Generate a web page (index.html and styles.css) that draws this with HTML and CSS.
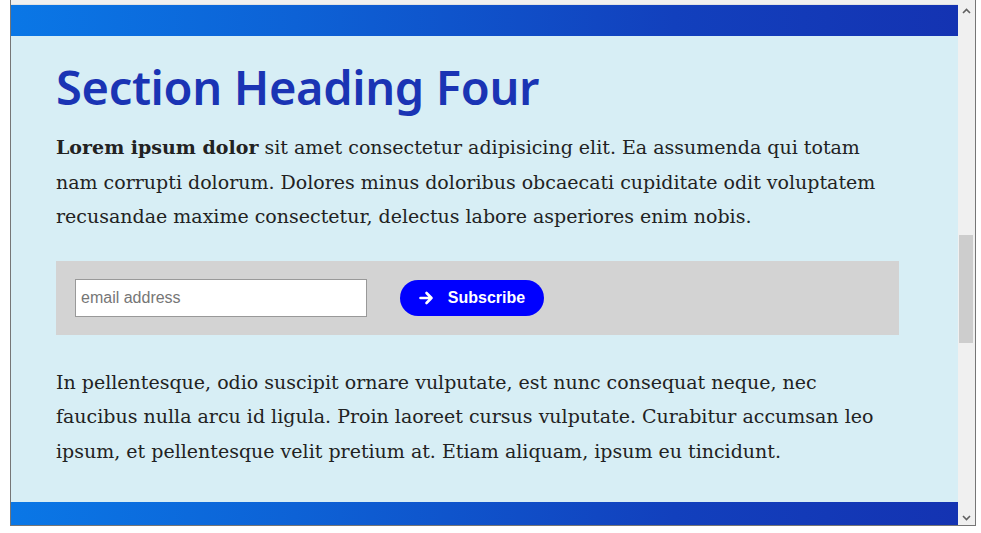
FILE: index.html
```html
<!DOCTYPE html>
<html>
<head>
<meta charset="utf-8">
<link rel="stylesheet" href="styles.css">
</head>
<body>
<div class="frame">
  <div class="viewport">
    <div class="strip"></div>
    <div class="band band-top"></div>
    <section class="section">
      <h2 class="heading">Section Heading Four</h2>
      <p class="text"><strong>Lorem ipsum dolor</strong> sit amet consectetur adipisicing elit. Ea assumenda qui totam<br>nam corrupti dolorum. Dolores minus doloribus obcaecati cupiditate odit voluptatem<br>recusandae maxime consectetur, delectus labore asperiores enim nobis.</p>
      <form class="signup">
        <input class="email" type="text" placeholder="email address">
        <button class="btn" type="button">
          <svg class="arrow" width="15" height="14" viewBox="0 0 15 14"><path d="M1.5 7h11M7.5 2l5 5-5 5" fill="none" stroke="#fff" stroke-width="2.6" stroke-linecap="round" stroke-linejoin="round"/></svg>
          <span>Subscribe</span>
        </button>
      </form>
      <p class="text">In pellentesque, odio suscipit ornare vulputate, est nunc consequat neque, nec<br>faucibus nulla arcu id ligula. Proin laoreet cursus vulputate. Curabitur accumsan leo<br>ipsum, et pellentesque velit pretium at. Etiam aliquam, ipsum eu tincidunt.</p>
    </section>
    <div class="band band-bottom"></div>
  </div>
  <div class="scrollbar">
    <svg class="sb-arrow" width="9" height="6" viewBox="0 0 9 6"><path d="M1 5l3.5-3.5L8 5" fill="none" stroke="#606060" stroke-width="1.6"/></svg>
    <div class="track"><div class="thumb"></div></div>
    <svg class="sb-arrow" width="9" height="6" viewBox="0 0 9 6"><path d="M1 1l3.5 3.5L8 1" fill="none" stroke="#606060" stroke-width="1.6"/></svg>
  </div>
</div>
</body>
</html>
```
FILE: styles.css
```css
html, body {
  margin: 0;
  padding: 0;
  background: #fff;
}
body {
  padding-left: 10px;
}
.frame {
  width: 964px;
  height: 525px;
  border: 1px solid #767676;
  border-top: none;
  display: flex;
  overflow: hidden;
}
.viewport {
  flex: 1;
  display: flex;
  flex-direction: column;
  min-width: 0;
}
.strip {
  height: 4px;
  background: #f0f0f0;
  border-bottom: 1px solid #e2e2e2;
}
.band {
  background: linear-gradient(90deg, #0a77e6 0%, #0d62d6 30%, #1240bd 70%, #1433b2 100%);
}
.band-top {
  height: 31px;
}
.band-bottom {
  flex: 1;
}
.section {
  background: #d7eef5;
  height: 466px;
  box-sizing: border-box;
  padding: 19px 59px 0 45px;
}
.heading {
  margin: 0;
  font-family: "Noto Sans", sans-serif;
  font-weight: 600;
  font-size: 47px;
  line-height: 64px;
  color: #1a34b4;
  letter-spacing: -0.35px;
}
.text {
  margin: 11px 0 0;
  font-family: "DejaVu Serif", serif;
  font-size: 19px;
  line-height: 34.5px;
  color: #222;
}
.text strong {
  font-weight: bold;
}
.signup {
  margin: 27px 0 30px;
  height: 74px;
  background: #d3d3d3;
  display: flex;
  align-items: center;
  padding: 0 19px;
  gap: 33px;
}
.email {
  width: 292px;
  height: 38px;
  box-sizing: border-box;
  border: 1px solid #999;
  background: #fff;
  padding: 0 5px;
  font-family: "Liberation Sans", Arial, sans-serif;
  font-size: 16px;
  margin: 0;
}
.email::placeholder {
  color: #767676;
}
.btn {
  height: 36px;
  width: 144px;
  border: none;
  border-radius: 18px;
  background: #0000ff;
  color: #fff;
  font-family: "Liberation Sans", Arial, sans-serif;
  font-weight: bold;
  font-size: 16px;
  display: flex;
  align-items: center;
  justify-content: center;
  gap: 14px;
  padding: 0;
}
.scrollbar {
  width: 17px;
  background: #f0f0f0;
  display: flex;
  flex-direction: column;
  align-items: center;
  padding: 8px 0 4px;
  box-sizing: border-box;
}
.sb-arrow {
  flex: none;
}
.track {
  flex: 1;
  width: 100%;
  position: relative;
  margin: 5px 0;
}
.thumb {
  position: absolute;
  left: 1px;
  right: 2px;
  top: 216px;
  height: 108px;
  background: #cdcdcd;
}
```
